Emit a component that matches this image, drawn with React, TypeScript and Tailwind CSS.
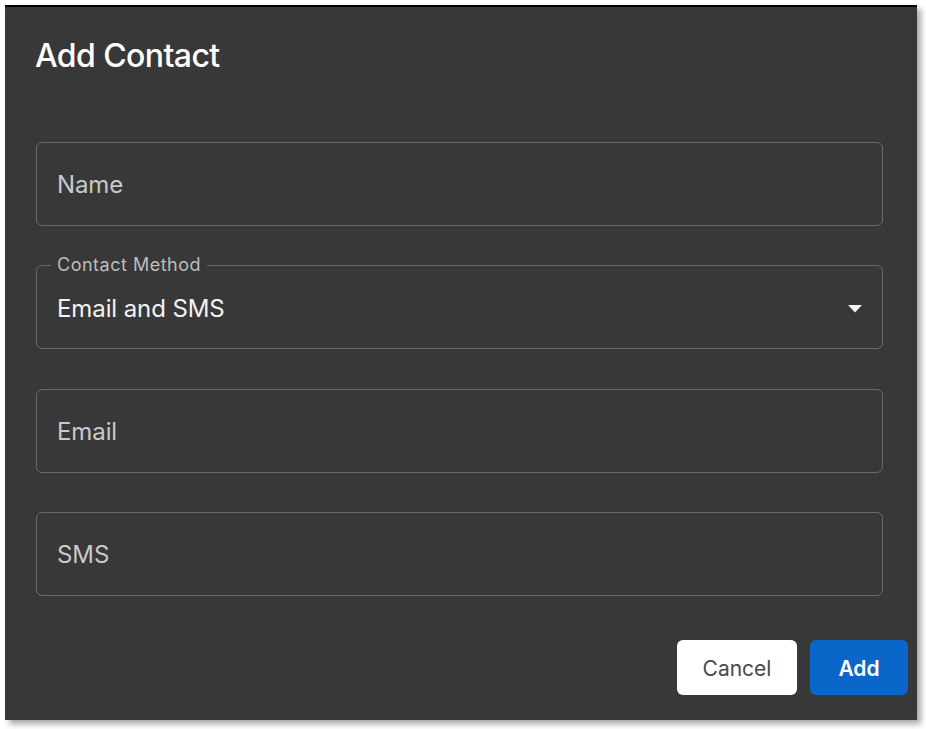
import React from 'react';

const font = { fontFamily: 'Inter, "Noto Sans", sans-serif' };

const TextField = ({ placeholder, className = '' }: { placeholder: string; className?: string }) => (
  <div className={`flex h-[84px] items-center rounded-[6px] border border-[#696969] px-[20px] pt-[2px] ${className}`}>
    <span className="text-[24px] tracking-[-0.1px] text-[#c9c9c9]">{placeholder}</span>
  </div>
);

export default function App() {
  return (
    <div className="h-[729px] w-[926px] bg-white pl-[5px] pt-[5px]" style={font}>
      <div className="flex h-[715px] w-[912px] flex-col border-t-2 border-black bg-[#383838] shadow-[4px_4px_6px_rgba(0,0,0,0.35)]">
        {/* Header */}
        <h2 className="ml-[30px] mt-[29px] h-[40px] text-[32px] font-medium leading-[40px] tracking-[-0.6px] text-white">
          Add Contact
        </h2>

        {/* Fields */}
        <div className="ml-[31px] mt-[66px] flex w-[847px] flex-col">
          <TextField placeholder="Name" />

          <div className="relative mt-[39px] flex h-[84px] items-center justify-between rounded-[6px] border border-[#696969] pl-[20px] pr-[20px] pt-[3px]">
            <span className="absolute -top-[12px] left-[14px] bg-[#383838] px-[6px] text-[18px] leading-[22px] tracking-[0.5px] text-[#bdbdbd]">
              Contact Method
            </span>
            <span className="text-[24px] tracking-[-0.1px] text-[#f2f2f2]">Email and SMS</span>
            <svg width="14" height="8" viewBox="0 0 14 8">
              <path d="M0 0h14L7 7.5z" fill="#f5f5f5" />
            </svg>
          </div>

          <TextField placeholder="Email" className="mt-[40px]" />
          <TextField placeholder="SMS" className="mt-[39px]" />
        </div>

        {/* Actions */}
        <div className="mr-[9px] mt-[44px] flex gap-[13px] self-end">
          <button className="h-[55px] w-[120px] rounded-[6px] bg-white pt-[3px] text-[21px] text-[#4a4a4a]">Cancel</button>
          <button className="h-[55px] w-[98px] rounded-[6px] bg-[#0a66c8] pt-[3px] text-[21px] font-semibold text-white">Add</button>
        </div>
      </div>
    </div>
  );
}
